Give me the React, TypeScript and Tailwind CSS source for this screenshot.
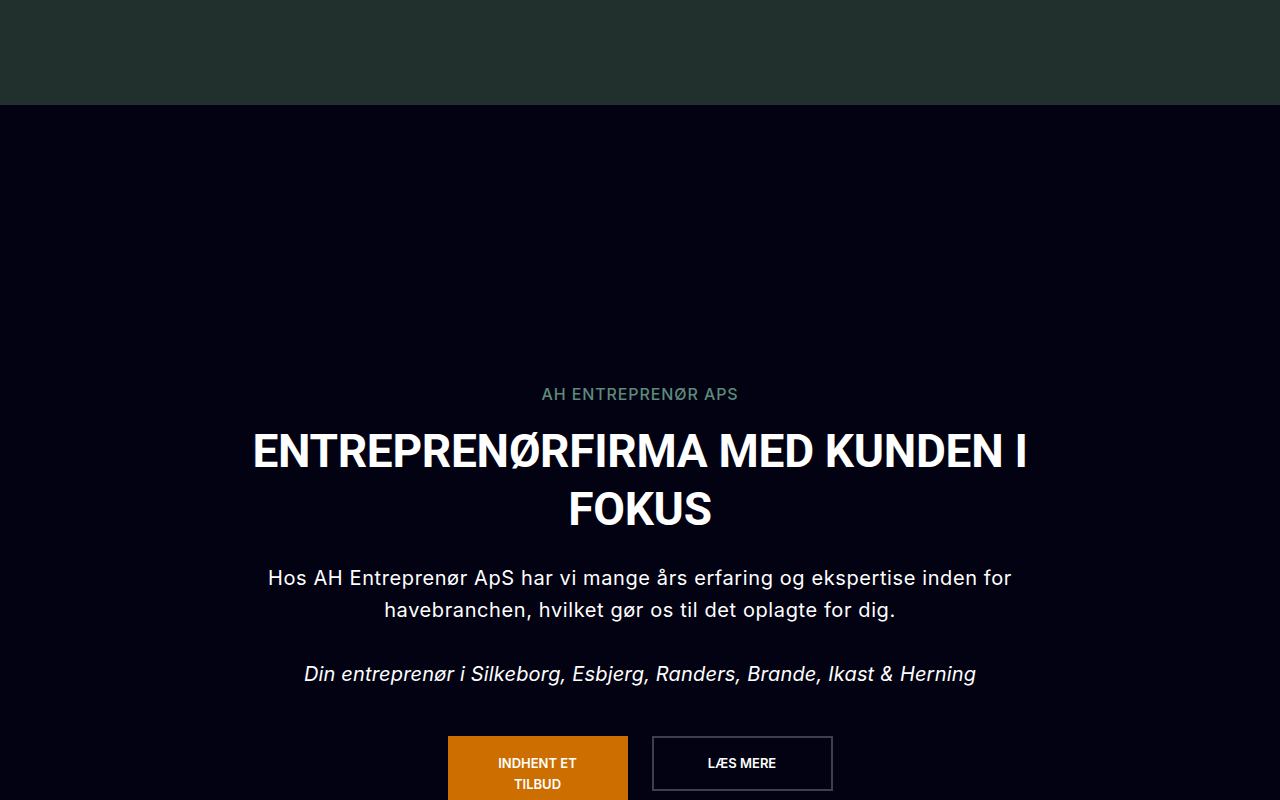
export default function App() {
  const font = { fontFamily: 'Inter, "Noto Sans", sans-serif' };
  return (
    <div className="min-h-screen bg-[#020212]" style={font}>
      {/* Header bar */}
      <header className="h-[105px] bg-[#21302d]" />

      {/* Hero */}
      <section className="flex justify-center pt-[277px]">
        <div className="flex w-[800px] flex-col items-center text-center">
          <p className="text-[16px] leading-[24px] font-medium tracking-[0.9px] text-[#5e8a7c]">
            AH ENTREPRENØR APS
          </p>
          <h1 className="mt-[16px] font-['Roboto',sans-serif] text-[46px] leading-[58px] font-bold tracking-[-0.3px] text-white">
            ENTREPRENØRFIRMA MED KUNDEN I FOKUS
          </h1>
          <p className="mt-[24px] text-[20px] leading-[32px] tracking-[0.6px] text-white">
            Hos AH Entreprenør ApS har vi mange års erfaring og ekspertise inden for havebranchen, hvilket gør os til det oplagte for dig.
          </p>
          <p className="mt-[32px] text-[20px] leading-[32px] tracking-[0.17px] italic text-white">
            Din entreprenør i Silkeborg, Esbjerg, Randers, Brande, Ikast &amp; Herning
          </p>
          <div className="mt-[46px] flex items-start gap-[24px]">
            <button className="w-[180px] border-2 border-[#cc6e00] bg-[#cc6e00] px-[46px] py-[15px] text-[13px] leading-[21px] font-semibold text-white">
              INDHENT ET TILBUD
            </button>
            <button className="w-[181px] border-2 border-[#3e3e4e] bg-transparent px-[46px] py-[15px] text-[13px] leading-[21px] font-semibold text-white">
              LÆS MERE
            </button>
          </div>
        </div>
      </section>
    </div>
  );
}
